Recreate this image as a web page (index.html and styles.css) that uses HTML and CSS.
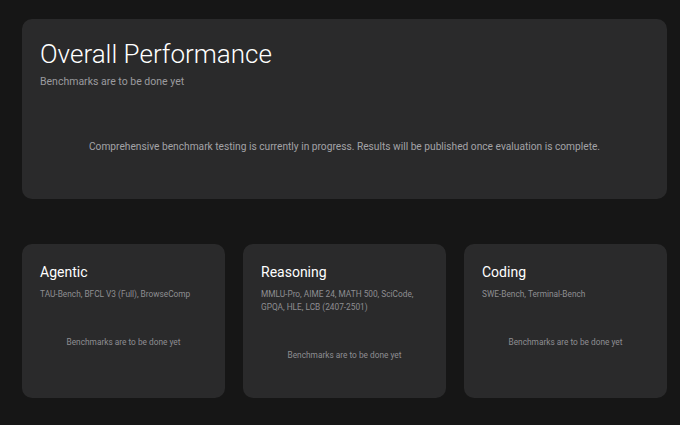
FILE: index.html
```html
<!DOCTYPE html>
<html>
	<head>
		<title>Performance</title>
		<meta name="viewport" content="width=device-width" />
		<link rel="stylesheet" href="styles.css">
	</head>
	<body>
		<div class="page">

			<section class="card overall">
				<h1>Overall Performance</h1>
				<p class="sub">Benchmarks are to be done yet</p>
				<p class="notice">Comprehensive benchmark testing is currently in progress. Results will be published once evaluation is complete.</p>
			</section>

			<div class="grid">
				<section class="card group">
					<h2>Agentic</h2>
					<p class="list">TAU-Bench, BFCL V3 (Full), BrowseComp</p>
					<p class="pending">Benchmarks are to be done yet</p>
				</section>

				<section class="card group">
					<h2>Reasoning</h2>
					<p class="list">MMLU-Pro, AIME 24, MATH 500, SciCode, GPQA, HLE, LCB (2407-2501)</p>
					<p class="pending">Benchmarks are to be done yet</p>
				</section>

				<section class="card group">
					<h2>Coding</h2>
					<p class="list">SWE-Bench, Terminal-Bench</p>
					<p class="pending">Benchmarks are to be done yet</p>
				</section>
			</div>

		</div>
	</body>
</html>
```

FILE: styles.css
```css
* {
	margin: 0;
	padding: 0;
	box-sizing: border-box;
}

html, body {
	background: #161616;
	height: 100%;
	font-family: Roboto, "Noto Sans", sans-serif;
	color: #fff;
}

.page {
	padding: 19px 13px 0 22px;
}

.card {
	background: #2a2a2b;
	border-radius: 10px;
	padding: 18px;
}

.overall {
	height: 180px;
}

.overall h1 {
	font-size: 26px;
	font-weight: 300;
	line-height: 32px;
	margin-top: 1px;
}

.overall .sub {
	font-size: 10.5px;
	color: #9b9b9f;
	margin-top: 5px;
}

.overall .notice {
	font-size: 10.2px;
	color: #a3a3a7;
	text-align: center;
	margin-top: 53px;
}

.grid {
	display: grid;
	grid-template-columns: repeat(3, 1fr);
	gap: 18px;
	margin-top: 45px;
}

.group h2 {
	font-size: 14px;
	font-weight: 400;
	line-height: 20px;
}

.group .list {
	font-size: 8.3px;
	line-height: 13px;
	color: #8e8e92;
	margin-top: 6px;
}

.group .pending {
	font-size: 8.3px;
	color: #8e8e92;
	text-align: center;
	padding: 36px 0 20px;
}
```
